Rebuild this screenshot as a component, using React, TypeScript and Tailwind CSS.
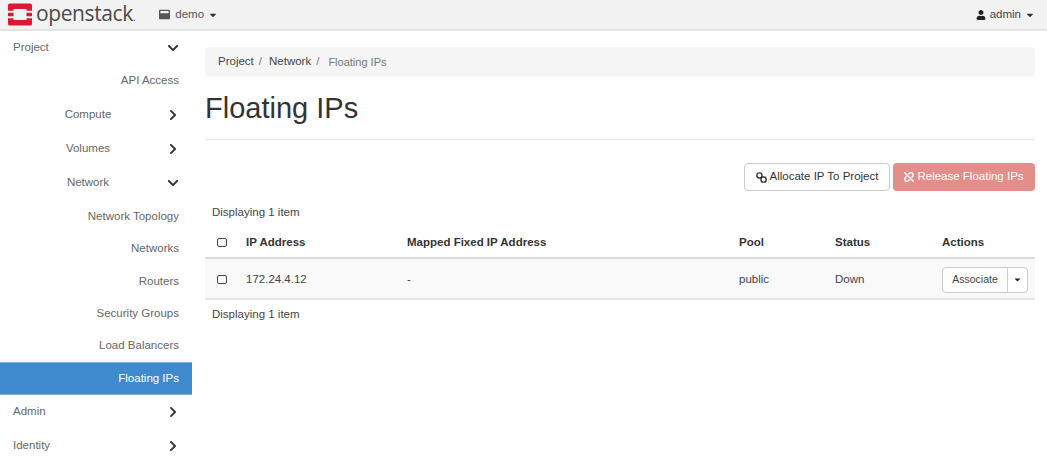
import { FaCaretDown, FaChevronDown, FaChevronRight, FaUnlink, FaUser, FaWindowMaximize } from 'react-icons/fa';

const navItems = [
  { label: 'Project', level: 0, open: true, h: 'h-[33px]' },
  { label: 'API Access', level: 2, h: 'h-[34px]' },
  { label: 'Compute', level: 1, h: 'h-[34px]' },
  { label: 'Volumes', level: 1, h: 'h-[34px]' },
  { label: 'Network', level: 1, open: true, h: 'h-[34px]' },
  { label: 'Network Topology', level: 2, h: 'h-[33px]' },
  { label: 'Networks', level: 2, h: 'h-[32px]' },
  { label: 'Routers', level: 2, h: 'h-[33px]' },
  { label: 'Security Groups', level: 2, h: 'h-[32px]' },
  { label: 'Load Balancers', level: 2, h: 'h-[32px]' },
  { label: 'Floating IPs', level: 2, active: true, h: 'h-[33px]' },
  { label: 'Admin', level: 0, h: 'h-[34px]' },
  { label: 'Identity', level: 0, h: 'h-[33px]' },
];

const tableCols = 'grid grid-cols-[41px_161px_332px_96px_107px_1fr] items-center';

function Logo() {
  return (
    <svg width="24" height="23" viewBox="0 0 26 24" className="shrink-0">
      <path fill="#da1a32" d="M2 0h22a2 2 0 0 1 2 2v6h-6V6H6v2H0V2a2 2 0 0 1 2-2zM0 10h6v4H0zM20 10h6v4h-6zM0 16h6v2h14v-2h6v6a2 2 0 0 1-2 2H2a2 2 0 0 1-2-2z" />
    </svg>
  );
}

function LinkIcon() {
  return (
    <svg width="11" height="11" viewBox="0 0 10 10" className="shrink-0" fill="none" stroke="#333" strokeWidth="1.3">
      <rect x="0.8" y="0.8" width="4.6" height="4.6" rx="2" />
      <rect x="4.6" y="4.6" width="4.6" height="4.6" rx="2" />
    </svg>
  );
}

function Checkbox() {
  return <span className="block w-[10px] h-[9px] border border-[#444] rounded-[2px] bg-white ml-[12px]" />;
}

export default function App() {
  return (
    <div className="w-[1047px] h-[458px] overflow-hidden bg-white text-[11.5px] text-[#333] font-['Liberation_Sans',Arial,sans-serif]">
      {/* top bar */}
      <div className="h-[31px] bg-[#f2f2f2] border-b-2 border-[#e3e3e3] flex items-center pl-2 pr-[12px]">
        <Logo />
        <span className="ml-[4px] text-[21px] leading-[28px] tracking-[-0.4px] text-[#4a4a4a] font-['Open_Sans',sans-serif]">openstack<span className="text-[11px]">.</span></span>
        <div className="ml-[24px] flex items-center gap-[5px] text-[#555]">
          <FaWindowMaximize className="text-[11px]" />
          <span>demo</span>
          <FaCaretDown className="-ml-[1px] text-[10px] text-[#333]" />
        </div>
        <div className="ml-auto flex items-center gap-[4px] text-[#444]">
          <FaUser className="text-[10px] text-[#222]" />
          <span>admin</span>
          <FaCaretDown className="text-[10px] text-[#333]" />
        </div>
      </div>

      <div className="flex">
        {/* sidebar */}
        <div className="w-[192px] shrink-0">
          {navItems.map((item) => (
            <div
              key={item.label}
              className={`${item.h} flex items-center ${item.active ? 'bg-[#3e8acc] text-white border-y border-[#7fb2de]' : 'text-[#666]'} ${item.level === 0 ? 'pl-[13px]' : ''}`}
            >
              {item.level === 0 && <span>{item.label}</span>}
              {item.level === 1 && <span className="ml-[34px] w-[108px] text-center">{item.label}</span>}
              {item.level === 2 && <span className="ml-auto mr-[13px]">{item.label}</span>}
              {item.level < 2 && (
                <span className={`${item.level === 0 ? 'ml-auto mr-[13px]' : 'ml-[24px]'} w-[13px] flex justify-center text-[#333]`}>
                  {item.open ? <FaChevronDown className="text-[12px]" /> : <FaChevronRight className="text-[12px]" />}
                </span>
              )}
            </div>
          ))}
        </div>

        {/* main */}
        <div className="ml-[13px] w-[830px] pt-[16px]">
          <div className="h-[30px] bg-[#f5f5f5] rounded flex items-center pl-[13px] text-[#555]">
            <span className="text-[#444]">Project</span>
            <span className="mx-[5px] text-[#777]">/</span>
            <span className="ml-[2px] text-[#444]">Network</span>
            <span className="mx-[5px] text-[#777]">/</span>
            <span className="ml-[4px] text-[11px] text-[#777]">Floating IPs</span>
          </div>

          <div className="h-[63px] border-b border-[#e8e8e8] flex items-center">
            <h1 className="text-[29px] leading-none text-[#333]">Floating IPs</h1>
          </div>

          <div className="mt-[23px] flex justify-end gap-[3px]">
            <button className="h-[28px] w-[146px] bg-white border border-[#ccc] rounded flex items-center justify-center gap-[3px] text-[#333]">
              <LinkIcon />
              Allocate IP To Project
            </button>
            <button className="h-[28px] w-[142px] bg-[#e58d8b] rounded flex items-center justify-center gap-[3px] text-white">
              <FaUnlink className="text-[10px]" />
              Release Floating IPs
            </button>
          </div>

          <div className="mt-[14px] pl-[7px] h-[15px] leading-[15px] text-[#444]">Displaying 1 item</div>

          <div className={`${tableCols} mt-[6px] h-[33px] pt-[2px] border-b-2 border-[#ddd] font-bold text-[#333]`}>
            <Checkbox />
            <span>IP Address</span>
            <span>Mapped Fixed IP Address</span>
            <span>Pool</span>
            <span>Status</span>
            <span>Actions</span>
          </div>
          <div className={`${tableCols} h-[41px] pt-[2px] bg-[#f9f9f9] border-b-2 border-[#e6e6e6] text-[#444]`}>
            <Checkbox />
            <span>172.24.4.12</span>
            <span>-</span>
            <span>public</span>
            <span>Down</span>
            <div className="flex h-[26px] w-[86px] bg-white border border-[#ccc] rounded text-[10.5px]">
              <span className="w-[65px] flex items-center justify-center border-r border-[#ccc]">Associate</span>
              <span className="flex-1 flex items-center justify-center text-[#222]">
                <FaCaretDown className="text-[9px]" />
              </span>
            </div>
          </div>

          <div className="mt-[7px] pl-[7px] h-[15px] leading-[15px] text-[#444]">Displaying 1 item</div>
        </div>
      </div>
    </div>
  );
}
